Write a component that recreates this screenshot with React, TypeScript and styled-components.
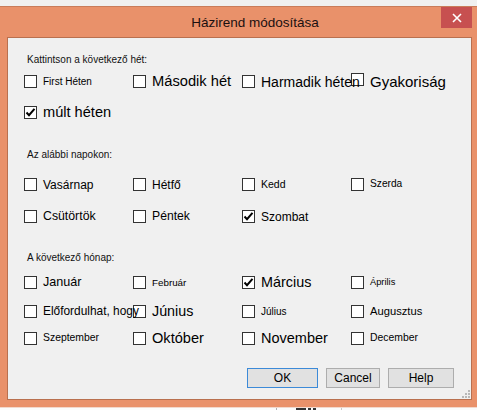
import React from "react";
import styled, { createGlobalStyle } from "styled-components";

const GlobalStyle = createGlobalStyle`
  html, body {
    margin: 0;
    padding: 0;
    background: #f0f0f0;
    font-family: "Liberation Sans", Arial, sans-serif;
    overflow: hidden;
  }
  * { box-sizing: border-box; }
`;

const Page = styled.div`
  width: 477px;
  height: 410px;
  padding-top: 6px;
  overflow: hidden;
`;

const Window = styled.div`
  width: 477px;
  background: #e9916a;
  border-top: 1px solid #c97c5a;
  padding: 0 5px 7px 7px;
`;

const TitleBar = styled.div`
  display: flex;
  align-items: flex-start;
  height: 30px;
`;

const Title = styled.div`
  flex: 1;
  padding-left: 62px;
  text-align: center;
  font-size: 13.5px;
  line-height: 31px;
  color: #1a1010;
  white-space: nowrap;
`;

const CloseButton = styled.div`
  width: 31px;
  height: 21px;
  background: #c75050;
  display: flex;
  align-items: center;
  justify-content: center;
`;

const Client = styled.div`
  position: relative;
  height: 363px;
  background: #f0f0f0;
  border: 1px solid #b9704f;
  padding-left: 16px;
  color: #000;
`;

const Heading = styled.div<{ $gap: number }>`
  margin-top: ${(p) => p.$gap}px;
  font-size: 10px;
  line-height: 12px;
  padding-left: 3px;
  white-space: nowrap;
  color: #111;
`;

const Row = styled.div<{ $gap: number }>`
  margin-top: ${(p) => p.$gap}px;
  display: grid;
  grid-template-columns: repeat(4, 109px);
  height: 13px;
`;

const Item = styled.div`
  display: flex;
  align-items: center;
  gap: 6px;
  height: 13px;
  white-space: nowrap;
`;

const Box = styled.div<{ $raise?: number }>`
  flex: none;
  width: 13px;
  height: 13px;
  border: 1px solid #333;
  background: #fff;
  position: relative;
  top: ${(p) => -(p.$raise || 0)}px;
  display: flex;
  align-items: center;
  justify-content: center;
`;

const Label = styled.span<{ $size: number }>`
  position: relative;
  z-index: 1;
  font-size: ${(p) => p.$size}px;
  line-height: 1;
  color: #000;
`;

const Buttons = styled.div`
  margin-top: 23px;
  display: flex;
  justify-content: flex-end;
  padding-right: 17px;
  gap: 8px;
`;

const Button = styled.div<{ $w: number; $default?: boolean }>`
  width: ${(p) => p.$w}px;
  height: 20px;
  background: #e1e1e1;
  border: 1px solid ${(p) => (p.$default ? "#3c8ad8" : "#adadad")};
  font-size: 12px;
  display: flex;
  align-items: center;
  justify-content: center;
  color: #000;
`;

const Grip = styled.svg`
  position: absolute;
  right: 1px;
  bottom: 1px;
`;

const Strip = styled.div`
  height: 3px;
  background: #fbfbfb;
  border-top: 1px solid #f2d8cc;
  display: flex;
  padding-left: 276px;
`;

const StripTab = styled.div`
  width: 66px;
  height: 3px;
  border-left: 1px solid #b0b0b0;
  border-right: 1px solid #c8c8c8;
  display: flex;
  padding-left: 19px;
  gap: 2px;
`;

const GlyphTop = styled.div<{ $w: number }>`
  width: ${(p) => p.$w}px;
  height: 2px;
  background: #333;
`;

const Check = () => (
  <svg width="11" height="11" viewBox="0 0 11 11">
    <path d="M1.5 5.5 L4 8.2 L9.5 1.8" fill="none" stroke="#000" strokeWidth="2" />
  </svg>
);

type Opt = { label: string; size: number; checked?: boolean; raise?: number };

const Option = ({ label, size, checked, raise }: Opt) => (
  <Item>
    <Box $raise={raise}>{checked && <Check />}</Box>
    <Label $size={size}>{label}</Label>
  </Item>
);

const weekRow1: Opt[] = [
  { label: "First Héten", size: 10 },
  { label: "Második hét", size: 14.7 },
  { label: "Harmadik héten", size: 14 },
  { label: "Gyakoriság", size: 15, raise: 2 },
];

const daysRow1: Opt[] = [
  { label: "Vasárnap", size: 12 },
  { label: "Hétfő", size: 12 },
  { label: "Kedd", size: 10.5 },
  { label: "Szerda", size: 10.2 },
];

const daysRow2: Opt[] = [
  { label: "Csütörtök", size: 12.3 },
  { label: "Péntek", size: 12.2 },
  { label: "Szombat", size: 12, checked: true },
];

const monthRow1: Opt[] = [
  { label: "Január", size: 12.6 },
  { label: "Február", size: 9.8 },
  { label: "Március", size: 14.4, checked: true },
  { label: "Április", size: 9.3 },
];

const monthRow2: Opt[] = [
  { label: "Előfordulhat, hogy", size: 11.9 },
  { label: "Június", size: 14.3 },
  { label: "Július", size: 10 },
  { label: "Augusztus", size: 11.2 },
];

const monthRow3: Opt[] = [
  { label: "Szeptember", size: 10.4 },
  { label: "Október", size: 14.6 },
  { label: "November", size: 14.5 },
  { label: "December", size: 10.4 },
];

const renderRow = (opts: Opt[]) => opts.map((o) => <Option key={o.label} {...o} />);

export default function App() {
  return (
    <>
      <GlobalStyle />
      <Page>
        <Window>
          <TitleBar>
            <Title>Házirend módosítása</Title>
            <CloseButton>
              <svg width="10" height="10" viewBox="0 0 10 10">
                <path d="M1 1 L9 9 M9 1 L1 9" stroke="#fff" strokeWidth="1.6" />
              </svg>
            </CloseButton>
          </TitleBar>
          <Client>
            <Heading $gap={16}>Kattintson a következő hét:</Heading>
            <Row $gap={9}>{renderRow(weekRow1)}</Row>
            <Row $gap={18}>
              <Option label="múlt héten" size={14.6} checked />
            </Row>
            <Heading $gap={30}>Az alábbi napokon:</Heading>
            <Row $gap={17}>{renderRow(daysRow1)}</Row>
            <Row $gap={19}>{renderRow(daysRow2)}</Row>
            <Heading $gap={29}>A következő hónap:</Heading>
            <Row $gap={12}>{renderRow(monthRow1)}</Row>
            <Row $gap={16}>{renderRow(monthRow2)}</Row>
            <Row $gap={14}>{renderRow(monthRow3)}</Row>
            <Buttons>
              <Button $w={71} $default>OK</Button>
              <Button $w={54}>Cancel</Button>
              <Button $w={66}>Help</Button>
            </Buttons>
            <Grip width="9" height="9" viewBox="0 0 9 9">
              {[
                [7, 1],
                [4, 4],
                [7, 4],
                [1, 7],
                [4, 7],
                [7, 7],
              ].map(([x, y]) => (
                <rect key={`${x}-${y}`} x={x} y={y} width="2" height="2" fill="#b8b8b8" />
              ))}
            </Grip>
          </Client>
        </Window>
        <Strip>
          <StripTab>
            <GlyphTop $w={10} />
            <GlyphTop $w={3} />
            <GlyphTop $w={3} />
          </StripTab>
        </Strip>
      </Page>
    </>
  );
}
